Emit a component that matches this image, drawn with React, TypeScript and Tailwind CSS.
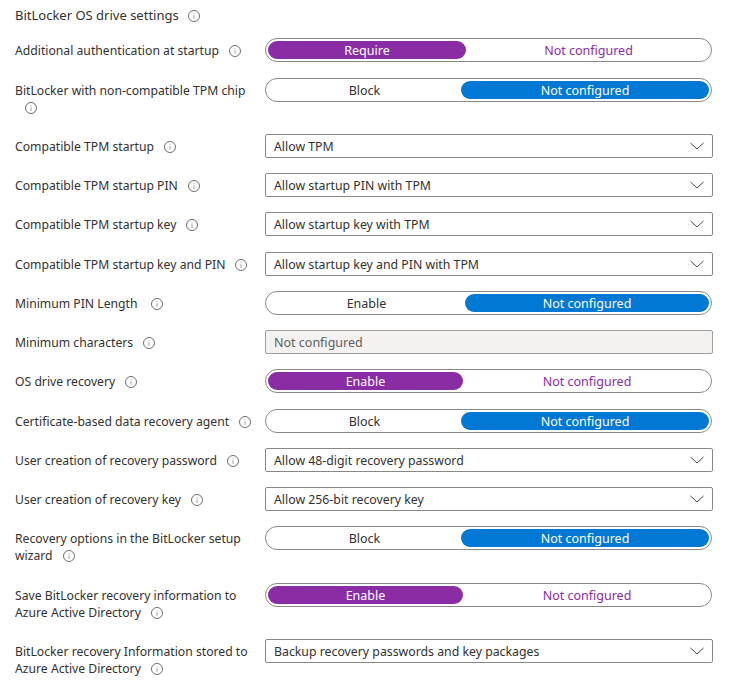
type Row =
  | { kind: "toggle"; label: string; left: string; right: string; active: "left" | "right"; split: string }
  | { kind: "select"; label: string; value: string }
  | { kind: "input"; label: string; value: string };

const rows: Row[] = [
  { kind: "toggle", label: "Additional authentication at startup", left: "Require", right: "Not configured", active: "left", split: "w-[198px]" },
  { kind: "toggle", label: "BitLocker with non-compatible TPM chip", left: "Block", right: "Not configured", active: "right", split: "w-[248px]" },
  { kind: "select", label: "Compatible TPM startup", value: "Allow TPM" },
  { kind: "select", label: "Compatible TPM startup PIN", value: "Allow startup PIN with TPM" },
  { kind: "select", label: "Compatible TPM startup key", value: "Allow startup key with TPM" },
  { kind: "select", label: "Compatible TPM startup key and PIN", value: "Allow startup key and PIN with TPM" },
  { kind: "toggle", label: "Minimum PIN Length\u00a0", left: "Enable", right: "Not configured", active: "right", split: "w-[244px]" },
  { kind: "input", label: "Minimum characters", value: "Not configured" },
  { kind: "toggle", label: "OS drive recovery", left: "Enable", right: "Not configured", active: "left", split: "w-[195px]" },
  { kind: "toggle", label: "Certificate-based data recovery agent", left: "Block", right: "Not configured", active: "right", split: "w-[248px]" },
  { kind: "select", label: "User creation of recovery password", value: "Allow 48-digit recovery password" },
  { kind: "select", label: "User creation of recovery key", value: "Allow 256-bit recovery key" },
  { kind: "toggle", label: "Recovery options in the BitLocker setup wizard", left: "Block", right: "Not configured", active: "right", split: "w-[248px]" },
  { kind: "toggle", label: "Save BitLocker recovery information to Azure Active Directory", left: "Enable", right: "Not configured", active: "left", split: "w-[195px]" },
  { kind: "select", label: "BitLocker recovery Information stored to Azure Active Directory", value: "Backup recovery passwords and key packages" },
];

function InfoIcon({ className }: { className?: string }) {
  return (
    <svg width="12" height="12" viewBox="0 0 12 12" className={className}>
      <circle cx="6" cy="6" r="5.5" fill="none" stroke="#605e5c" strokeWidth="0.9" />
      <rect x="5.5" y="5.2" width="1" height="3.6" fill="#a19f9d" />
      <rect x="5.5" y="3.2" width="1" height="1" fill="#a19f9d" />
    </svg>
  );
}

function Chevron() {
  return (
    <svg width="14" height="8" viewBox="0 0 14 8" className="shrink-0">
      <path d="M0.5 1 L7 7 L13.5 1" fill="none" stroke="#323130" strokeWidth="0.9" />
    </svg>
  );
}

function Toggle({ row }: { row: Extract<Row, { kind: "toggle" }> }) {
  const isLeft = row.active === "left";
  const onClass = isLeft ? "bg-[#8a2da5] text-white" : "bg-[#0078d4] text-white";
  return (
    <div className="flex h-6 w-[447px] items-center rounded-full border border-[#8a8886] bg-white px-[2px] text-[12.5px]">
      {isLeft ? (
        <>
          <span className={`flex h-[18px] shrink-0 items-center justify-center rounded-[9px] pt-[1px] ${row.split} ${onClass}`}>{row.left}</span>
          <span className="flex h-[18px] flex-1 items-center justify-center pl-[2px] pt-[1px] text-[#8a2da5]">{row.right}</span>
        </>
      ) : (
        <>
          <span className="flex h-[18px] flex-1 items-center justify-center pt-[1px] text-[#323130]">{row.left}</span>
          <span className={`flex h-[18px] shrink-0 items-center justify-center rounded-[9px] pt-[1px] ${row.split} ${onClass}`}>{row.right}</span>
        </>
      )}
    </div>
  );
}

function Control({ row }: { row: Row }) {
  if (row.kind === "toggle") return <Toggle row={row} />;
  if (row.kind === "input") {
    return (
      <div className="flex h-6 w-[448px] items-start rounded-[2px] border border-[#a19f9d] bg-[#f3f2f1] pl-2 pt-[3px] text-[12.5px] text-[#605e5c]">
        {row.value}
      </div>
    );
  }
  return (
    <div className="flex h-6 w-[448px] items-center justify-between rounded-[2px] border border-[#8a8886] bg-white pl-2 pr-2 text-[12.3px] text-[#323130]">
      <span className="mt-[3px] self-start">{row.value}</span>
      <Chevron />
    </div>
  );
}

export default function App() {
  return (
    <div className="h-[682px] w-[751px] overflow-hidden bg-white pl-[15px] pt-[7px] font-['Noto_Sans','Open_Sans',sans-serif] text-[12.2px] leading-[17px] text-[#323130]">
      <div className="flex h-[17px] items-center text-[13px]">
        <span>BitLocker OS drive settings</span>
        <InfoIcon className="ml-[9px]" />
      </div>
      <div className="mt-[14.4px] flex flex-col gap-[15.25px]">
        {rows.map((row) => (
          <div key={row.label} className="flex items-start">
            <div className="w-[250px] shrink-0 pb-[3px] pr-[6px] pt-[4px]">
              <span>{row.label}</span>
              <InfoIcon className="ml-[10px] inline-block align-[-2px]" />
            </div>
            <Control row={row} />
          </div>
        ))}
      </div>
    </div>
  );
}
